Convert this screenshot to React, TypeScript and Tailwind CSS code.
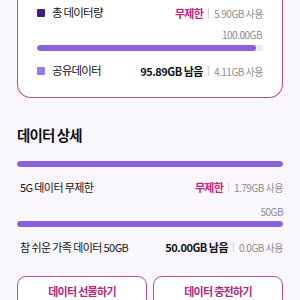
const FONT = "font-['Noto_Sans_CJK_KR','Noto_Sans',sans-serif]";

const Sep = () => <span className="mx-[5px] h-[10px] w-px bg-[#d9d6de]" />;

const UsageRow = ({
  main,
  mainClass,
  used,
}: {
  main: string;
  mainClass: string;
  used: string;
}) => (
  <div className="flex items-center whitespace-nowrap">
    <span className={mainClass}>{main}</span>
    <Sep />
    <span className="text-[10px] tracking-[-0.5px] text-[#8e8b93]">{used}</span>
  </div>
);

const Bar = ({ pct, track }: { pct: number; track: string }) => (
  <div className={`h-[6px] w-full overflow-hidden rounded-full ${track}`}>
    <div className="h-full rounded-full bg-[#8a62dc]" style={{ width: `${pct}%` }} />
  </div>
);

export default function App() {
  return (
    <div className={`${FONT} h-[300px] w-[300px] overflow-hidden whitespace-nowrap bg-[#f9f6fc] text-[#141317]`}>
      {/* 상단 요약 카드 */}
      <div className="mx-[17px] rounded-b-[14px] border-x-[1.5px] border-b-[1.5px] border-[#b44e94] bg-white px-[19px] pt-[4px] pb-[17px]">
        <div className="flex h-[18px] items-center justify-between">
          <div className="flex items-center gap-[7px]">
            <span className="h-[8px] w-[8px] rounded-[1px] bg-[#421c82]" />
            <span className="text-[11.5px] tracking-[-0.8px]">총 데이터량</span>
          </div>
          <UsageRow
            main="무제한"
            mainClass="text-[11px] font-bold tracking-[-0.8px] text-[#c4247f]"
            used="5.90GB 사용"
          />
        </div>
        <div className="mt-[5px] flex h-[14px] items-center justify-end pr-[1px] text-[10px] tracking-[-0.5px] text-[#8e8b93]">
          100.00GB
        </div>
        <div className="mt-[4px]">
          <Bar pct={97} track="bg-[#ebe9ee]" />
        </div>
        <div className="mt-[11px] flex h-[18px] items-center justify-between">
          <div className="flex items-center gap-[7px]">
            <span className="h-[8px] w-[8px] rounded-[1px] bg-[#9a78e8]" />
            <span className="text-[11.5px] tracking-[-0.8px]">공유데이터</span>
          </div>
          <UsageRow
            main="95.89GB 남음"
            mainClass="text-[11px] font-bold tracking-[-0.5px]"
            used="4.11GB 사용"
          />
        </div>
      </div>

      {/* 데이터 상세 */}
      <div className="mx-[17px] mt-[26px]">
        <div className="flex h-[22px] items-center text-[14.5px] font-bold tracking-[-0.9px]">
          데이터 상세
        </div>
        <div className="mt-[15px]">
          <Bar pct={100} track="bg-[#ebe9ee]" />
        </div>
        <div className="mt-[11px] flex h-[18px] items-center justify-between pl-[3px]">
          <span className="text-[11px] tracking-[-0.6px]">5G 데이터 무제한</span>
          <UsageRow
            main="무제한"
            mainClass="text-[11px] font-bold tracking-[-0.8px] text-[#c4247f]"
            used="1.79GB 사용"
          />
        </div>
        <div className="mt-[8px] flex h-[14px] items-center justify-end text-[10px] tracking-[-0.5px] text-[#8e8b93]">
          50GB
        </div>
        <div className="mt-[3px]">
          <Bar pct={100} track="bg-[#ebe9ee]" />
        </div>
        <div className="mt-[11px] flex h-[18px] items-center justify-between pl-[3px]">
          <span className="text-[11px] tracking-[-0.6px]">참 쉬운 가족 데이터 50GB</span>
          <UsageRow
            main="50.00GB 남음"
            mainClass="text-[11px] font-bold tracking-[-0.5px]"
            used="0.0GB 사용"
          />
        </div>
        <div className="mt-[20px] flex gap-[6px]">
          <button className="flex h-[32px] flex-1 items-center justify-center rounded-[9px] border-[1.5px] border-[#b4508f] bg-white pb-[2px] text-[11px] font-bold tracking-[-0.7px] text-[#b0287f]">
            데이터 선물하기
          </button>
          <button className="flex h-[32px] flex-1 items-center justify-center rounded-[9px] border-[1.5px] border-[#b4508f] bg-white pb-[2px] text-[11px] font-bold tracking-[-0.7px] text-[#b0287f]">
            데이터 충전하기
          </button>
        </div>
      </div>
    </div>
  );
}
